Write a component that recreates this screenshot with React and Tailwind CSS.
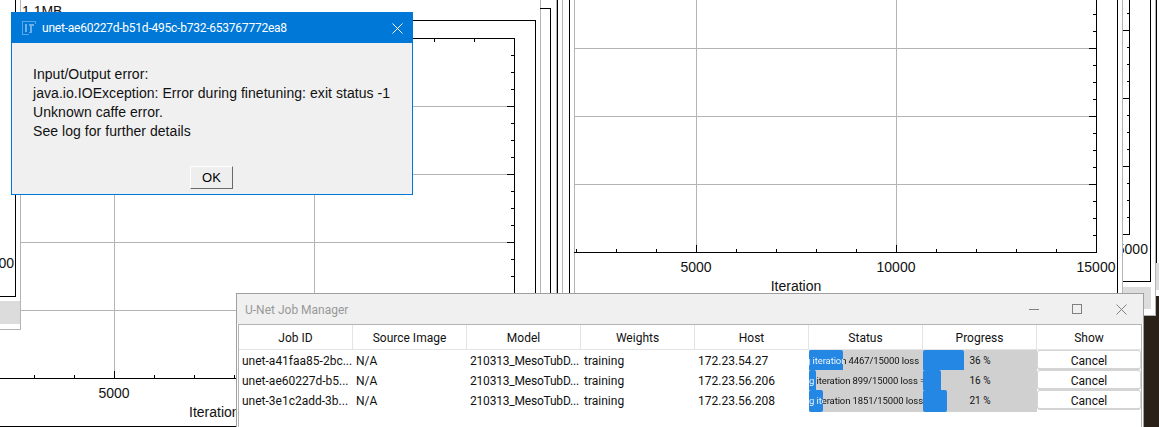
const SANS = 'font-["Liberation_Sans",Arial,sans-serif]'
const UI = 'font-["Roboto","Noto_Sans",sans-serif]'

const range = (start, step, end) => {
  const out = []
  for (let v = start; v <= end; v += step) out.push(v)
  return out
}

// plot with grid, axes and labels, drawn in the page's own coordinates
function Plot({ left, gridLeft, top, right, bottom, gridX, gridY, ticksX, ticksY, showTop, labels }) {
  const grey = '#b4b4b4'
  return (
    <svg className="absolute left-0 top-0" width="1159" height="427">
      <g stroke={grey} shapeRendering="crispEdges">
        {gridX.map(x => <line key={x} x1={x + 0.5} x2={x + 0.5} y1={top} y2={bottom} />)}
        {gridY.map(y => <line key={y} x1={gridLeft} x2={right} y1={y + 0.5} y2={y + 0.5} />)}
      </g>
      <g stroke="#000" shapeRendering="crispEdges">
        <line x1={left} x2={right + 1} y1={bottom + 0.5} y2={bottom + 0.5} />
        <line x1={right + 0.5} x2={right + 0.5} y1={top} y2={bottom} />
        {showTop && <line x1={gridLeft} x2={right + 1} y1={top + 0.5} y2={top + 0.5} />}
        {ticksX.map(x => {
          const major = gridX.includes(x) || x === right
          return (
            <g key={x}>
              <line x1={x + 0.5} x2={x + 0.5} y1={bottom - (major ? 7 : 3)} y2={bottom} />
              {showTop && <line x1={x + 0.5} x2={x + 0.5} y1={top} y2={top + (major ? 7 : 4)} />}
            </g>
          )
        })}
        {ticksY.map(y => {
          const major = gridY.includes(y)
          return <line key={y} x1={right - (major ? 7 : 3)} x2={right} y1={y + 0.5} y2={y + 0.5} />
        })}
      </g>
      <g className={`text-[14px] ${SANS}`} fill="#111">
        {labels.map(l => <text key={l.text} x={l.x} y={l.y} textAnchor={l.anchor || 'middle'}>{l.text}</text>)}
      </g>
    </svg>
  )
}

function IJIcon() {
  return (
    <svg width="14" height="14" viewBox="0 0 14 14" className="shrink-0" shapeRendering="crispEdges">
      <path d="M0 0h14v3h-1v-2h-12v12h6v1h-7z" fill="#5aa5e6" />
      <path d="M3 3h2v8h-2zM7 3h5v2h-2v7h-3v-1h1v-6h-1z" fill="#6db0ea" />
    </svg>
  )
}

function ErrorDialog() {
  return (
    <div className="absolute left-[11px] top-[12px] w-[402px] h-[183px] border border-[#0078d7] bg-[#f0f0f0] flex flex-col">
      <div className="h-[30px] bg-[#0078d7] flex items-center pl-[10px] pr-[9px] text-white">
        <IJIcon />
        <span className={`ml-[6px] text-[12px] tracking-[-0.23px] ${UI}`}>unet-ae60227d-b51d-495c-b732-653767772ea8</span>
        <svg width="11" height="11" viewBox="0 0 11 11" className="ml-auto" stroke="#fff" strokeWidth="1">
          <path d="M0.5 0.5l10 10M10.5 0.5l-10 10" />
        </svg>
      </div>
      <div className={`pl-[21px] pt-[22px] text-[14px] leading-[19px] tracking-[0.05px] text-[#111] ${SANS}`}>
        <p>Input/Output error:</p>
        <p>java.io.IOException: Error during finetuning: exit status -1</p>
        <p>Unknown caffe error.</p>
        <p>See log for further details</p>
      </div>
      <div className="flex justify-center mt-auto mb-[5px] pr-[1px]">
        <button className={`w-[43px] h-[23px] bg-[#eeeeee] border border-t-white border-l-white border-r-[#696969] border-b-[#696969] text-[13px] text-black ${SANS}`}>OK</button>
      </div>
    </div>
  )
}

const columns = ['Job ID', 'Source Image', 'Model', 'Weights', 'Host', 'Status', 'Progress', 'Show']

const jobs = [
  { id: 'unet-a41faa85-2bc...', host: '172.23.54.27', status: 'g iteration 4467/15000 loss', shift: 'left-[-4px]', ink: 'bg-[linear-gradient(90deg,#fff_38px,#111_38px)]', inner: 'w-[34px]', pct: '36 %', bar: 'w-[41px]' },
  { id: 'unet-ae60227d-b5...', host: '172.23.56.206', status: 'g iteration 899/15000 loss =', shift: 'left-0', ink: 'bg-[linear-gradient(90deg,#fff_7px,#111_7px)]', inner: 'w-[7px]', pct: '16 %', bar: 'w-[18px]' },
  { id: 'unet-3e1c2add-3b...', host: '172.23.56.208', status: 'g iteration 1851/15000 loss', shift: 'left-0', ink: 'bg-[linear-gradient(90deg,#fff_14px,#111_14px)]', inner: 'w-[14px]', pct: '21 %', bar: 'w-[24px]' },
]

function StatusCell({ job }) {
  return (
    <div className="relative h-full bg-[#d0d0d0] overflow-hidden">
      <div className={`absolute left-0 top-0 h-full bg-[#2487e3] rounded-[2px] ${job.inner}`} />
      <span className={`absolute top-0 text-[9.5px] tracking-[-0.1px] whitespace-nowrap bg-clip-text text-transparent ${job.ink} ${job.shift}`}>{job.status}</span>
    </div>
  )
}

function ProgressCell({ job }) {
  return (
    <div className="relative h-full bg-[#d0d0d0] flex justify-center text-[10px] text-[#111]">
      <div className={`absolute left-0 top-0 h-full bg-[#2487e3] rounded-[2px] ${job.bar}`} />
      <span className="relative">{job.pct}</span>
    </div>
  )
}

function JobManager() {
  return (
    <div className={`absolute left-[236px] top-[293px] w-[908px] h-[140px] bg-white border border-[#a0a0a0] ${UI}`}>
      <div className="h-[30px] bg-[#f0f0f0] flex items-center pt-[2px] pl-[8px] text-[12px] text-[#999]">
        <span>U-Net Job Manager</span>
        <svg width="98" height="12" viewBox="0 0 98 12" stroke="#808080" fill="none" shapeRendering="crispEdges" className="ml-auto mr-[16px] -mt-[2px]">
          <path d="M0 6.5h10" />
          <rect x="43.5" y="1.5" width="9" height="9" />
          <path d="M87.5 1.5l10 10M97.5 1.5l-10 10" shapeRendering="auto" />
        </svg>
      </div>
      <div className="mx-[1px] h-[110px] border-t border-l border-r border-[#b4b4b4] text-[12px] text-[#111]">
        <div className="grid grid-cols-[114px_114px_114px_114px_114px_114px_114px_1fr] h-[25px] border-b border-[#e4e4e4]">
          {columns.map((c, i) => (
            <div key={c} className={`flex items-center justify-center pt-[1px] ${i < 7 ? 'border-r border-[#e4e4e4]' : ''}`}>{c}</div>
          ))}
        </div>
        {jobs.map(job => (
          <div key={job.id} className="grid grid-cols-[114px_114px_114px_114px_114px_114px_114px_1fr] h-[20px] leading-[22px]">
            <div className="pl-[3px] whitespace-nowrap">{job.id}</div>
            <div className="pl-[3px]">N/A</div>
            <div className="pl-[3px] whitespace-nowrap tracking-[-0.2px]">210313_MesoTubD...</div>
            <div className="pl-[3px]">training</div>
            <div className="pl-[3px]">{job.host}</div>
            <StatusCell job={job} />
            <ProgressCell job={job} />
            <button className="h-[20px] bg-white rounded-[3px] border border-b-2 border-[#d4d4d4] pt-[2px] text-[12px] leading-none text-[#111]">Cancel</button>
          </div>
        ))}
      </div>
    </div>
  )
}

export default function App() {
  return (
    <div className="relative w-[1159px] h-[427px] overflow-hidden bg-white">
      {/* left plot window */}
      <Plot left={0} gridLeft={20} top={38} right={514} bottom={378} showTop
        gridX={[114, 314]} gridY={[106, 174, 242, 310]}
        ticksX={range(34, 40, 514)} ticksY={range(55, 17, 378)}
        labels={[
          { text: '5000', x: 114, y: 398 },
          { text: 'Iteration', x: 189, y: 417, anchor: 'start' },
          { text: '1.1MB', x: 22, y: 16, anchor: 'start' },
        ]} />
      <div className="absolute left-[-10px] top-[20px] w-[546px] h-[407px] border border-black" />

      {/* window behind, sticking out at the far left */}
      <div className="absolute left-0 top-0 w-[21px] h-[330px] bg-white border-r border-b border-[#b4b4b4]">
        <div className="absolute left-[-10px] top-[-10px] w-[26px] h-[307px] border border-black" />
        <div className={`absolute right-[6px] top-[255px] text-[14px] leading-[16px] text-[#111] whitespace-nowrap ${SANS}`}>00</div>
        <div className="absolute left-0 top-[301px] w-[20px] h-[23px] bg-[#dcdcdc]" />
      </div>

      {/* edges of the stacked windows between the plots */}
      <div className="absolute left-[540px] top-0 w-px h-[293px] bg-[#b4b4b4]" />
      <div className="absolute left-[540px] top-[8px] w-[11px] h-[300px] border-t border-r border-black" />
      <div className="absolute left-[556px] top-0 w-[2px] h-[293px] border-l border-[#b4b4b4] border-r-black border-r" />
      <div className="absolute left-[562px] top-0 w-px h-[293px] bg-[#b4b4b4]" />
      <div className="absolute left-[569px] top-0 w-px h-[293px] bg-black" />

      {/* main plot window */}
      <div className="absolute left-[574px] top-0 w-[549px] h-[293px] border-l border-r border-[#b4b4b4]">
        <div className="absolute right-[4px] top-0 w-px h-full bg-black" />
      </div>
      <Plot left={574} gridLeft={574} top={0} right={1096} bottom={252}
        gridX={[696, 896]} gridY={[48, 116, 184]}
        ticksX={range(576, 40, 1096)} ticksY={range(14, 17, 252)}
        labels={[
          { text: '5000', x: 696, y: 272 },
          { text: '10000', x: 896, y: 272 },
          { text: '15000', x: 1096, y: 272 },
          { text: 'Iteration', x: 796, y: 291 },
        ]} />

      {/* next plot window on the right */}
      <div className="absolute left-[1122px] top-0 w-[34px] h-[316px] bg-white border-l border-b border-r border-[#b4b4b4] overflow-hidden">
        <svg className="absolute left-0 top-0" width="8" height="235" stroke="#000" shapeRendering="crispEdges">
          {range(13, 17, 234).map(y => (
            <line key={y} x1={(y - 30) % 68 === 0 ? 0 : 4} x2="7" y1={y + 0.5} y2={y + 0.5} />
          ))}
        </svg>
        <div className="absolute left-0 top-[-5px] w-[7px] h-[240px] border-r border-b border-black" />
        <div className={`absolute left-[-14px] top-[241px] text-[14px] leading-[16px] text-[#111] whitespace-nowrap ${SANS}`}>15000</div>
        <div className="absolute left-[-10px] top-[-5px] w-[38px] h-[287px] border-r border-b border-black" />
        <div className="absolute left-0 top-[287px] w-[28px] h-[22px] bg-[#dcdcdc]" />
      </div>

      {/* far right edge and desktop behind it */}
      <div className="absolute left-[1156px] top-0 w-px h-[263px] bg-black" />
      <div className="absolute left-[1156px] top-[263px] w-[3px] h-[27px] bg-[#dcdcdc]" />
      <div className="absolute left-[1156px] top-[296px] w-[3px] h-[131px] bg-[#2a2118]" />
      <div className="absolute left-[1144px] top-[316px] w-[15px] h-[111px] bg-[#2a2118]" />

      <JobManager />
      <ErrorDialog />
    </div>
  )
}
